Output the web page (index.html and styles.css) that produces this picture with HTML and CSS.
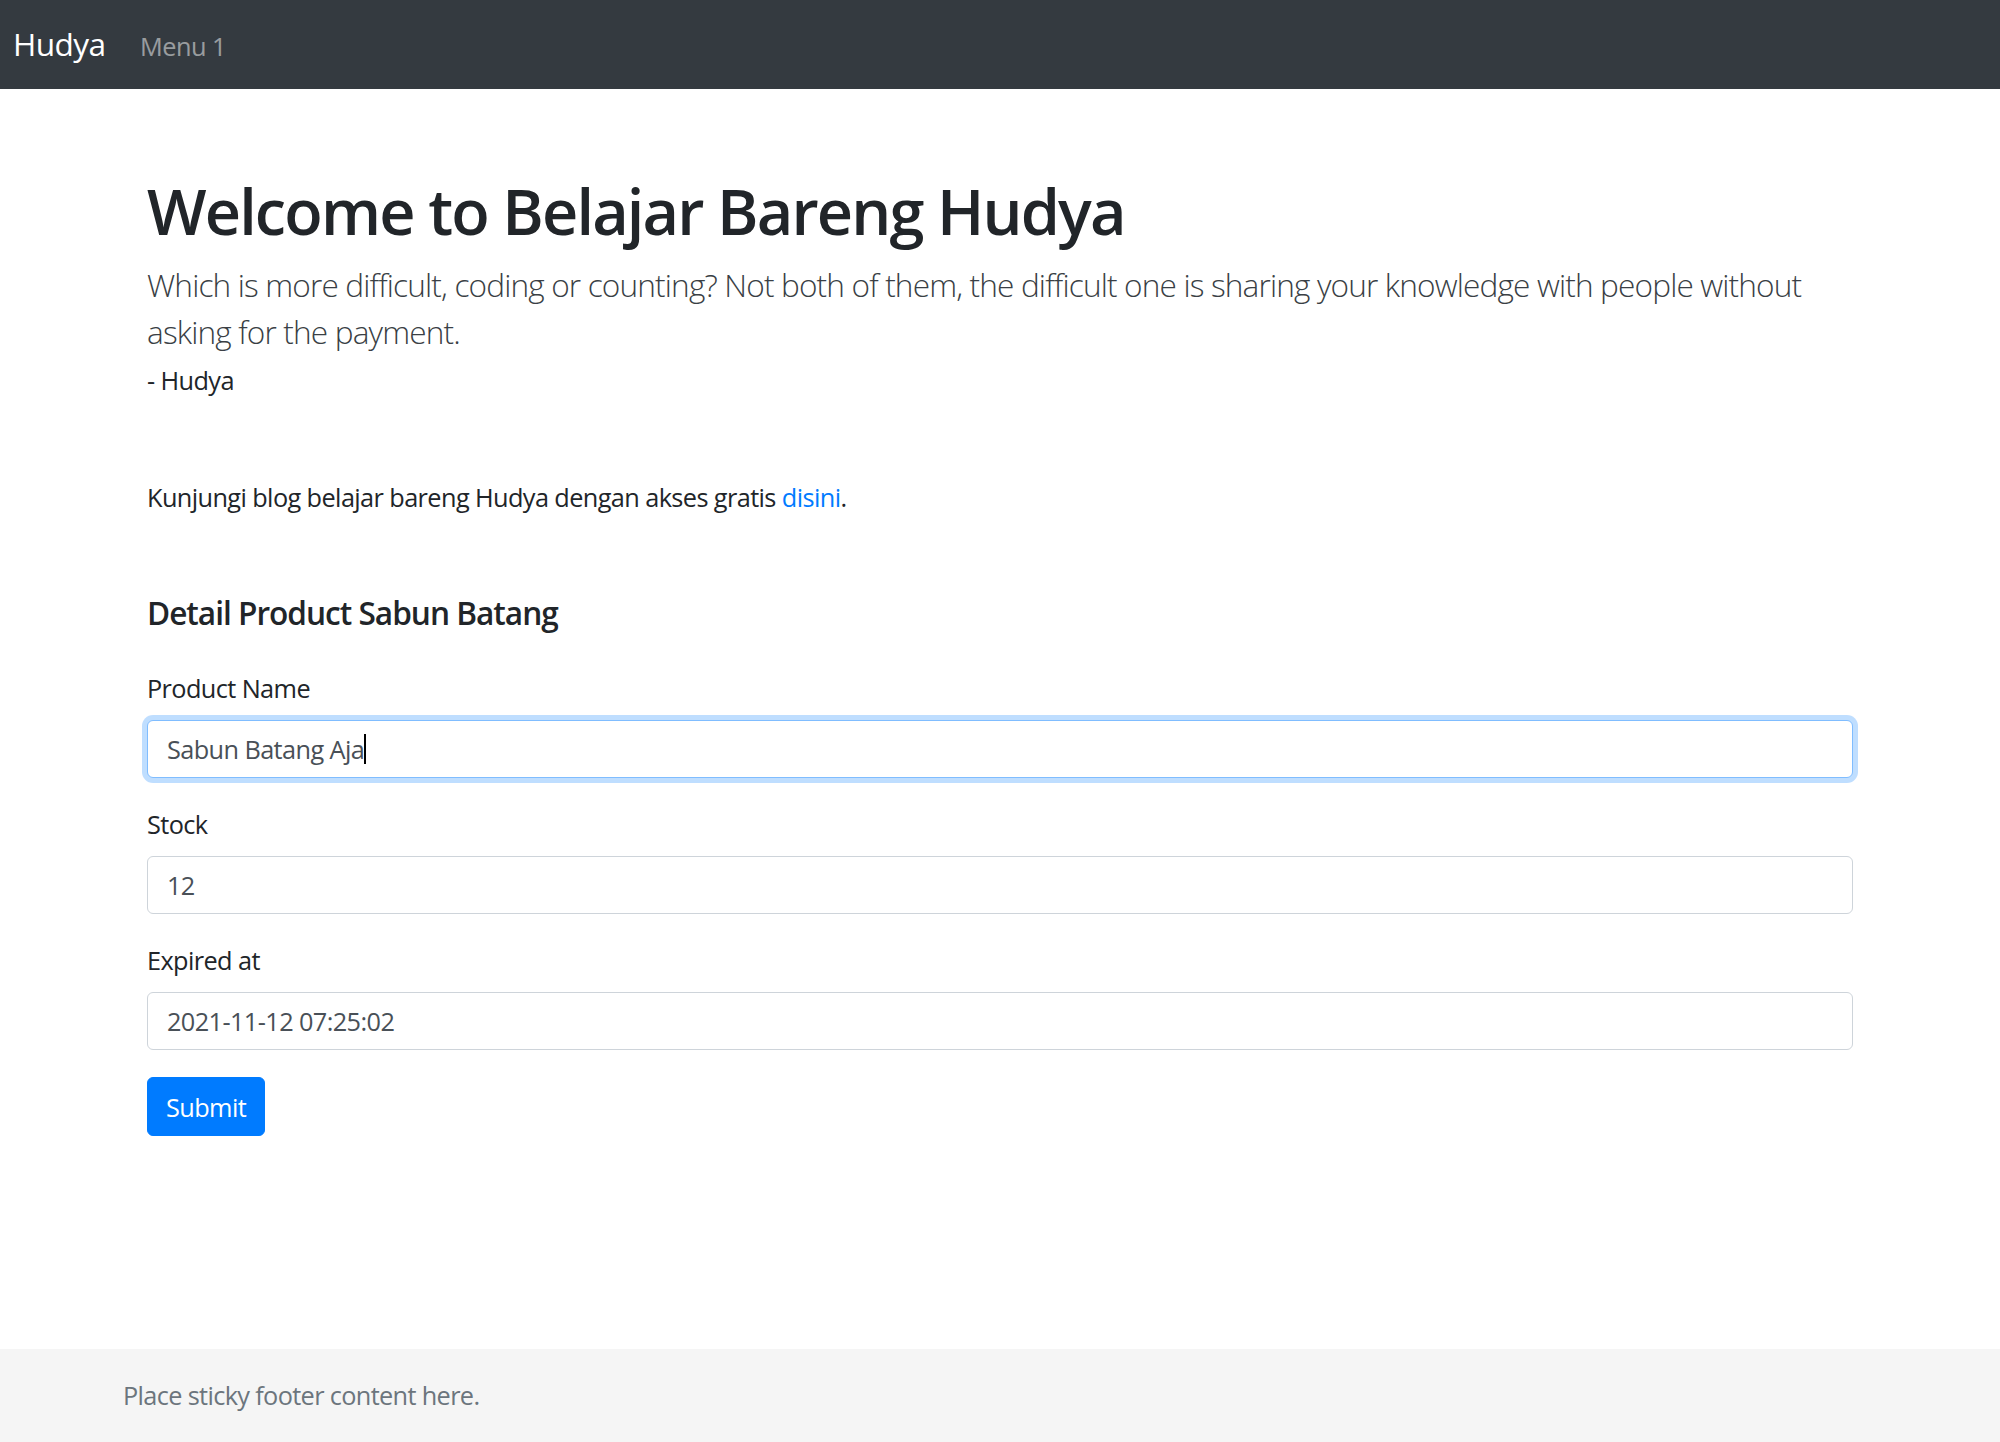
FILE: index.html
```html
<!DOCTYPE html>
<html lang="en">
<head>
<meta charset="utf-8">
<title>Belajar Bareng Hudya</title>
<link rel="stylesheet" href="styles.css">
</head>
<body>
<header class="navbar">
  <a class="brand" href="#">Hudya</a>
  <nav class="nav">
    <a class="nav-link" href="#">Menu 1</a>
  </nav>
</header>

<main class="main">
  <div class="container">
    <h1 class="title">Welcome to Belajar Bareng Hudya</h1>
    <p class="lead">Which is more difficult, coding or counting? Not both of them, the difficult one is sharing your knowledge with people without asking for the payment.</p>
    <p class="author">- Hudya</p>

    <p class="visit">Kunjungi blog belajar bareng Hudya dengan akses gratis <a class="link" href="#">disini</a>.</p>

    <h5 class="section-title">Detail Product Sabun Batang</h5>
    <form class="form">
      <div class="form-group">
        <label class="label" for="name">Product Name</label>
        <div class="field focused" id="name"><span class="field-text">Sabun Batang Aja</span><span class="caret"></span></div>
      </div>
      <div class="form-group">
        <label class="label" for="stock">Stock</label>
        <input class="field" id="stock" type="text" value="12">
      </div>
      <div class="form-group">
        <label class="label" for="expired">Expired at</label>
        <input class="field" id="expired" type="text" value="2021-11-12 07:25:02">
      </div>
      <button class="btn" type="button">Submit</button>
    </form>
  </div>
</main>

<footer class="footer">
  <div class="footer-inner">
    <span class="muted">Place sticky footer content here.</span>
  </div>
</footer>
</body>
</html>
```
FILE: styles.css
```css
html, body {
  margin: 0;
  padding: 0;
}
body {
  min-height: 1442px;
  display: flex;
  flex-direction: column;
  font-family: "Open Sans", "Noto Sans", sans-serif;
  font-size: 25.3px;
  line-height: 38px;
  letter-spacing: -0.6px;
  color: #212529;
  background: #fff;
}
* { box-sizing: border-box; }

.navbar {
  height: 89px;
  background: #343a40;
  display: flex;
  align-items: baseline;
  padding: 20px 0 0 13px;
  flex-shrink: 0;
}
.brand {
  font-size: 31.6px;
  line-height: 47px;
  color: #fff;
  text-decoration: none;
  margin-right: 22px;
  letter-spacing: -0.6px;
}
.nav { display: flex; }
.nav-link {
  font-size: 25.3px;
  line-height: 38px;
  letter-spacing: -0.5px;
  color: rgba(255,255,255,.5);
  text-decoration: none;
  padding: 0 12.6px;
}

.main {
  flex: 1 0 auto;
}
.container {
  width: 1706px;
  margin: 0 auto;
  padding-top: 84px;
  padding-bottom: 40px;
}
.title {
  margin: 0 0 12px;
  font-size: 63px;
  line-height: 76px;
  font-weight: 600;
  letter-spacing: -1.85px;
}
.lead {
  margin: 0 0 6px;
  font-size: 31.6px;
  line-height: 47px;
  font-weight: 300;
  color: #3a3f45;
  letter-spacing: -0.85px;
}
.author {
  margin: 0 0 79px;
}
.visit {
  margin: 0 0 78px;
}
.link {
  color: #007bff;
  text-decoration: none;
}
.section-title {
  margin: 0 0 37px;
  font-size: 31.6px;
  line-height: 38px;
  font-weight: 600;
  letter-spacing: -1px;
}
.form { margin: 0; }
.form-group {
  margin-bottom: 27px;
}
.label {
  display: block;
  line-height: 38px;
  margin-bottom: 13px;
}
.field {
  display: flex;
  align-items: center;
  width: 100%;
  height: 58px;
  padding: 0 19px;
  font-family: inherit;
  font-size: 25.3px;
  letter-spacing: -0.6px;
  color: #495057;
  background: #fff;
  border: 1.5px solid #ced4da;
  border-radius: 6px;
  outline: none;
}
.field.focused {
  border-color: #80bdff;
  box-shadow: 0 0 0 5px rgba(0,123,255,.25);
}
.caret {
  display: inline-block;
  width: 1.5px;
  height: 30px;
  background: #000;
}
.btn {
  height: 59px;
  padding: 0 18px;
  font-family: inherit;
  font-size: 25.3px;
  letter-spacing: -0.6px;
  color: #fff;
  background: #007bff;
  border: 1.5px solid #007bff;
  border-radius: 6px;
}

.footer {
  flex-shrink: 0;
  height: 93px;
  background: #f5f5f5;
}
.footer-inner {
  width: 1754px;
  margin: 0 auto;
  padding-top: 27px;
}
.muted {
  color: #6c757d;
  letter-spacing: -0.65px;
}
```
